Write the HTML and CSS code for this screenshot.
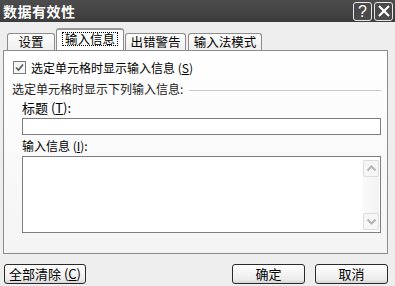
FILE: index.html
```html
<!DOCTYPE html>
<html>
<head>
<meta charset="utf-8">
<link rel="stylesheet" href="styles.css">
</head>
<body>
<div class="dialog">
  <div class="titlebar">
    <span class="title">数据有效性</span>
    <div class="tbtns">
      <span class="tbtn">?</span>
      <span class="tbtn"><svg width="14" height="14" viewBox="0 0 14 14"><path d="M2 2L12 12M12 2L2 12" stroke="#fff" stroke-width="2.2"/></svg></span>
    </div>
  </div>
  <div class="tabs">
    <div class="tab t1">设置</div>
    <div class="tab active"><span class="focus">输入信息</span></div>
    <div class="tab t3">出错警告</div>
    <div class="tab t4">输入法模式</div>
  </div>
  <div class="panel">
    <div class="checkrow">
      <span class="check"><svg width="9" height="9" viewBox="0 0 9 9"><path d="M1 4.5L3.5 7L8 1.5" fill="none" stroke="#555" stroke-width="1.6"/></svg></span>
      <span>选定单元格时显示输入信息 (<u>S</u>)</span>
    </div>
    <div class="group">
      <span>选定单元格时显示下列输入信息:</span>
      <span class="rule"></span>
    </div>
    <div class="label">标题 (<u>T</u>):</div>
    <div class="input"></div>
    <div class="label l2">输入信息 (<u>I</u>):</div>
    <div class="textarea">
      <div class="scroll">
        <span class="arrow"><svg width="11" height="7" viewBox="0 0 11 7"><path d="M1.5 5.5L5.5 1.5L9.5 5.5" fill="none" stroke="#b4b4b4" stroke-width="2"/></svg></span>
        <span class="arrow"><svg width="11" height="7" viewBox="0 0 11 7"><path d="M1.5 1.5L5.5 5.5L9.5 1.5" fill="none" stroke="#b4b4b4" stroke-width="2"/></svg></span>
      </div>
    </div>
  </div>
  <div class="footer">
    <button class="btn clear">全部清除 (<u>C</u>)</button>
    <div class="right">
      <button class="btn ok">确定</button>
      <button class="btn cancel">取消</button>
    </div>
  </div>
</div>
</body>
</html>
```
FILE: styles.css
```css
html, body {
  margin: 0;
  padding: 0;
}
body {
  width: 395px;
  height: 286px;
  overflow: hidden;
  background: #eeeeee;
  font-family: "Noto Sans CJK SC", "Liberation Sans", sans-serif;
  font-size: 12px;
  color: #000;
}
.dialog {
  width: 395px;
  height: 286px;
  display: flex;
  flex-direction: column;
}
.titlebar {
  height: 22px;
  background: linear-gradient(#4d4d4d, #3c3c3c);
  display: flex;
  align-items: center;
  justify-content: space-between;
  padding: 0 2px 0 3px;
}
.title {
  color: #fff;
  font-weight: bold;
  font-size: 14px;
  letter-spacing: 0.5px;
  line-height: 22px;
}
.tbtns {
  display: flex;
  gap: 2px;
}
.tbtn {
  width: 17px;
  height: 17px;
  border: 1px solid #e8e8e8;
  border-radius: 3px;
  background: #4a4a4a;
  color: #fff;
  font-family: "Liberation Sans", sans-serif;
  font-size: 16px;
  line-height: 17px;
  text-align: center;
  display: flex;
  align-items: center;
  justify-content: center;
}
.tabs {
  display: flex;
  align-items: flex-end;
  height: 21px;
  margin-top: 7px;
  padding-left: 7px;
  position: relative;
  z-index: 2;
}
.tab {
  height: 16px;
  border: 1px solid #8c8c8c;
  border-bottom: none;
  border-radius: 3px 3px 0 0;
  background: linear-gradient(#fdfdfd, #efefef);
  display: flex;
  align-items: center;
  justify-content: center;
  font-size: 12.5px;
  line-height: 16px;
}
.t1 { width: 46px; }
.t3 { width: 59px; margin-left: 1px; }
.t4 { width: 72px; margin-left: 2px; }
.active {
  width: 66px;
  background: #fff;
  margin-left: 1px;
  border-top: 2px solid #9a9a9a;
  height: 20px;
  align-items: flex-start;
}
.focus {
  border: 1px dotted #000;
  padding: 0 2px;
  line-height: 12px;
  margin-top: 2px;
  height: 12px;
}
.panel {
  height: 202px;
  margin: 0 7px 0 3px;
  border: 1px solid #8c8c8c;
  background: linear-gradient(#ffffff, #f4f4f4);
  padding: 0 6px 0 8px;
  display: flex;
  flex-direction: column;
}
.checkrow {
  display: flex;
  align-items: center;
  gap: 5px;
  margin-top: 10px;
  margin-left: 1px;
  height: 13px;
  line-height: 13px;
}
.check {
  width: 11px;
  height: 11px;
  border: 1px solid #7a7a7a;
  background: #f6f6f6;
  display: flex;
  align-items: center;
  justify-content: center;
}
.group {
  display: flex;
  align-items: center;
  margin-top: 8px;
  height: 14px;
  line-height: 14px;
  color: #222;
}
.rule {
  flex: 1;
  height: 1px;
  background: #c8c8c8;
  margin-left: 6px;
  margin-top: 2px;
}
.label {
  margin-top: 5px;
  margin-left: 10px;
  height: 14px;
  line-height: 14px;
  font-size: 13px;
}
.input {
  margin: 3px 0 0 10px;
  height: 15px;
  border: 1px solid #7d7d7d;
  background: #fff;
}
.l2 { margin-top: 4px; font-size: 12px; }
.textarea {
  margin: 3px 0 0 10px;
  height: 70px;
  border: 1px solid #7d7d7d;
  background: #fff;
  display: flex;
  justify-content: flex-end;
  padding: 3px 1px 2px 0;
}
.scroll {
  width: 16px;
  background: linear-gradient(90deg, #fafafa, #f2f2f2);
  display: flex;
  flex-direction: column;
  justify-content: space-between;
}
.arrow {
  height: 15px;
  border: 1px solid #dcdcdc;
  border-radius: 2px;
  background: #f6f6f6;
  display: flex;
  align-items: center;
  justify-content: center;
}
.footer {
  display: flex;
  justify-content: space-between;
  margin-top: 10px;
  padding: 0 7px 0 4px;
}
.right {
  display: flex;
  gap: 10px;
}
.btn {
  height: 20px;
  border: 1px solid #2a2a2a;
  border-radius: 3px;
  background: linear-gradient(#ffffff, #ececec 80%, #d6d6d6);
  font-family: "Noto Sans CJK SC", "Liberation Sans", sans-serif;
  font-size: 13px;
  line-height: 16px;
  padding: 0;
  color: #000;
}
.clear { width: 82px; }
.ok, .cancel { width: 73px; }
```
